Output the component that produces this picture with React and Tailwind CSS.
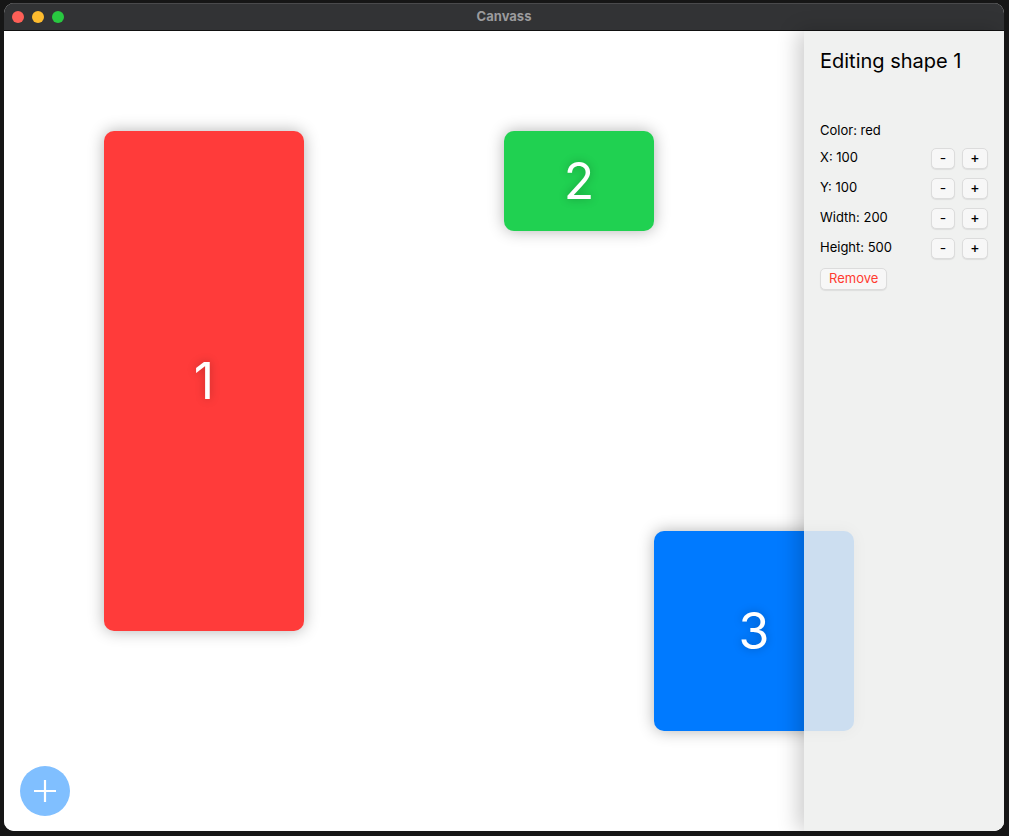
import { useState } from "react";

const shapes = [
  { id: 1, x: 100, y: 100, w: 200, h: 500, color: "bg-[#ff3b3a]" },
  { id: 2, x: 500, y: 100, w: 150, h: 100, color: "bg-[#20d151]" },
  { id: 3, x: 650, y: 500, w: 200, h: 200, color: "bg-[#007aff]" },
];

function StepRow({ label, value }) {
  return (
    <div className="flex items-center justify-between h-[30px]">
      <span>
        {label}: {value}
      </span>
      <div className="flex gap-[7px]">
        <button className="w-[24px] h-[21px] rounded-[5px] bg-[#f7f7f7] border border-[#dcdcdc] shadow-[0_1px_1px_rgba(0,0,0,0.08)] text-[14px] leading-none">
          -
        </button>
        <button className="w-[26px] h-[21px] rounded-[5px] bg-[#f7f7f7] border border-[#dcdcdc] shadow-[0_1px_1px_rgba(0,0,0,0.08)] text-[14px] font-medium leading-none">
          +
        </button>
      </div>
    </div>
  );
}

export default function App() {
  const [selected] = useState(shapes[0]);

  return (
    <div className="w-[1009px] h-[836px] bg-[#161616] pt-[3px] pl-[4px] font-['Inter','Liberation_Sans',sans-serif]">
      <div className="w-[1000px] h-[828px] rounded-[10px] overflow-hidden flex flex-col bg-white">
        {/* title bar */}
        <div className="relative h-[28px] bg-[#323335] border-t border-[#4a4a4c] border-b border-b-[#111] flex items-center">
          <div className="flex gap-[8px] pl-[8px]">
            <span className="w-[12px] h-[12px] rounded-full bg-[#fe5f57]" />
            <span className="w-[12px] h-[12px] rounded-full bg-[#febc2e]" />
            <span className="w-[12px] h-[12px] rounded-full bg-[#28c840]" />
          </div>
          <span className="absolute left-0 right-0 text-center text-[13px] font-bold text-[#9b9b9d]">
            Canvass
          </span>
        </div>

        {/* canvas */}
        <div className="relative flex-1 bg-white">
          {shapes.map((s) => (
            <div
              key={s.id}
              className={`absolute ${s.color} rounded-[10px] shadow-[0_0_16px_rgba(0,0,0,0.3)] flex items-center justify-center text-white text-[50px] [text-shadow:0_0_10px_rgba(0,0,0,0.25)]`}
              style={{ left: s.x, top: s.y, width: s.w, height: s.h }}
            >
              {s.id}
            </div>
          ))}

          <button className="absolute left-[16px] bottom-[15px] w-[50px] h-[50px] rounded-full bg-[#80bfff] flex items-center justify-center">
            <svg width="24" height="24" viewBox="0 0 24 24" stroke="white" strokeWidth="2.2" fill="none">
              <path d="M12 1v22M1 12h22" />
            </svg>
          </button>

          {/* sidebar */}
          <div className="absolute top-0 right-0 bottom-0 w-[200px] bg-[rgba(238,239,238,0.86)] shadow-[-6px_0_20px_rgba(0,0,0,0.2)] px-[16px] text-[13px] text-black">
            <h2 className="text-[20px] mt-[17px] mb-[45px] leading-[26px]">
              Editing shape {selected.id}
            </h2>
            <div className="h-[24px] flex items-center">Color: red</div>
            <StepRow label="X" value={selected.x} />
            <StepRow label="Y" value={selected.y} />
            <StepRow label="Width" value={selected.w} />
            <StepRow label="Height" value={selected.h} />
            <button className="mt-[5px] px-[8px] h-[22px] rounded-[5px] bg-[#f7f7f7] border border-[#dcdcdc] shadow-[0_1px_1px_rgba(0,0,0,0.08)] text-[#ff3b30] text-[13px]">
              Remove
            </button>
          </div>
        </div>
      </div>
    </div>
  );
}
